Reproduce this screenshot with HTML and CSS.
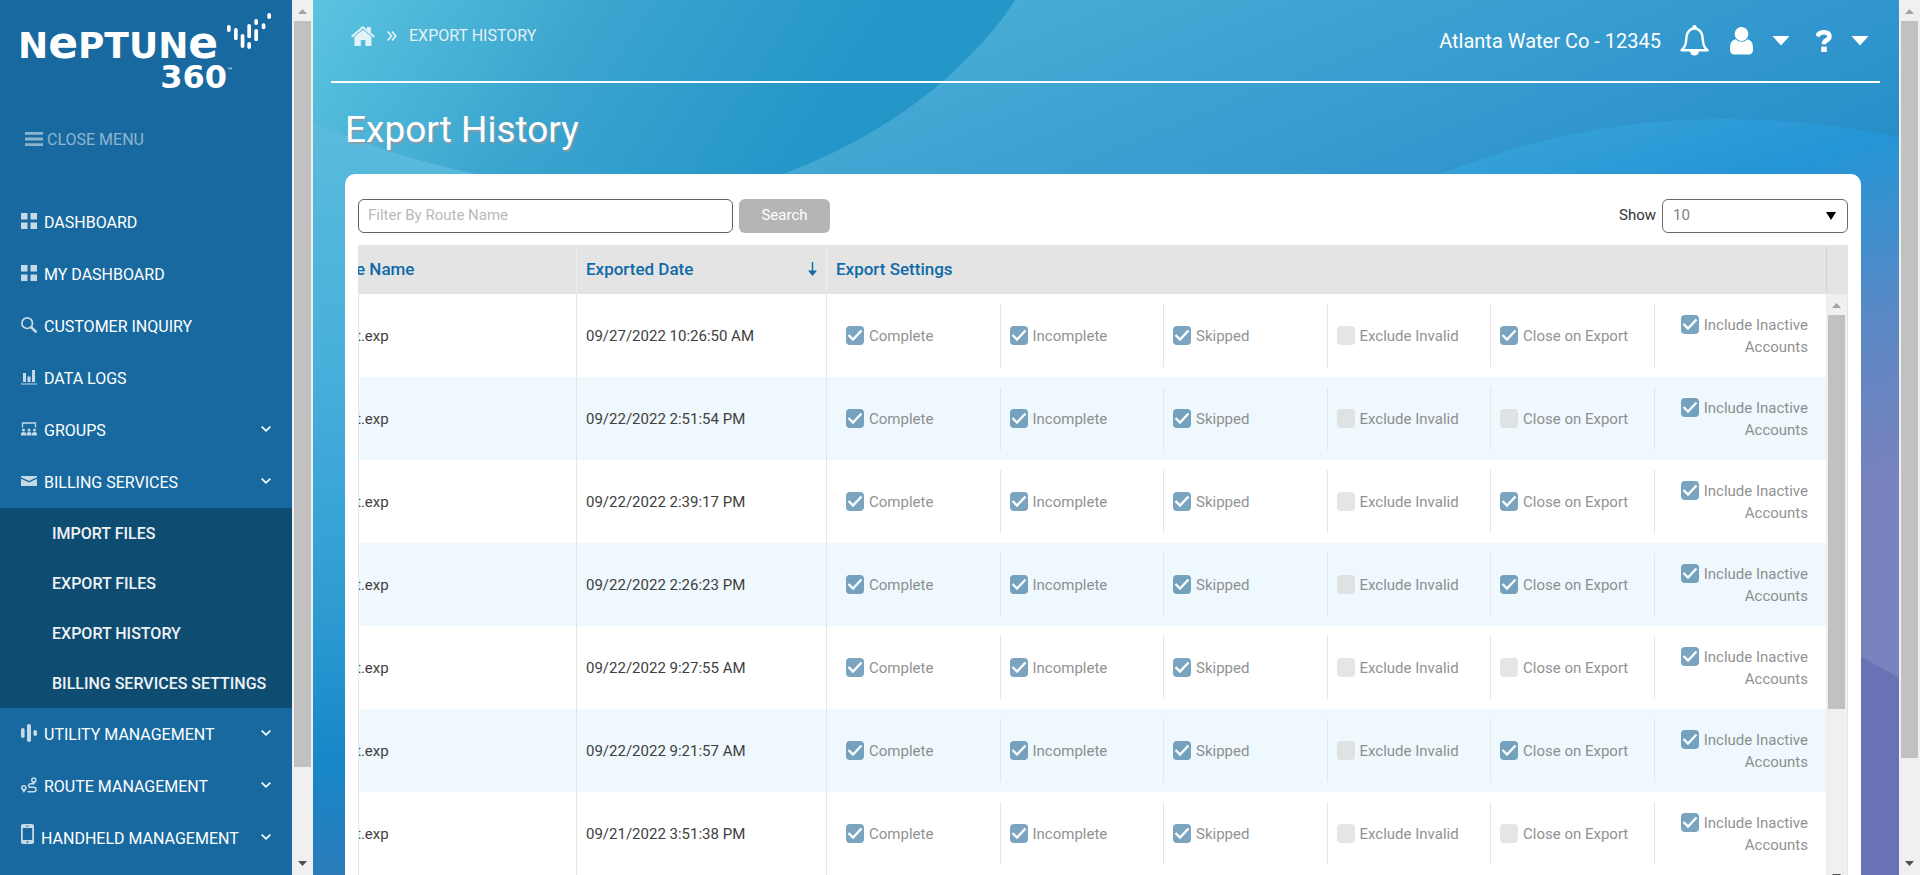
FILE: index.html
```html
<!DOCTYPE html>
<html lang="en">
<head>
<meta charset="utf-8">
<title>Export History - Neptune 360</title>
<link rel="stylesheet" href="styles.css">
</head>
<body>
<svg class="sprite" aria-hidden="true">
  <symbol id="i-tiles" viewBox="0 0 16 16"><path fill="currentColor" d="M0 0h6.500v6.500H0zM9.500 0H16v6.500H9.500zM0 9.500h6.500V16H0zM9.500 9.500H16V16H9.500z"/></symbol>
  <symbol id="i-search" viewBox="0 0 16 16"><circle cx="6.200" cy="6.200" r="5.300" fill="none" stroke="currentColor" stroke-width="1.700"/><path d="M10.500 10.500l4.200 4.200" stroke="currentColor" stroke-width="2.600" stroke-linecap="round"/></symbol>
  <symbol id="i-bars" viewBox="0 0 16 16"><path fill="currentColor" d="M2 4h3v9H2zM6.500 7.500h3V13h-3zM11 1h3v12h-3zM0 14.500h16v1H0z"/></symbol>
  <symbol id="i-groups" viewBox="0 0 16 16"><path fill="none" stroke="currentColor" stroke-width="1.300" d="M1.500 6.500V2h13v4.500"/><g fill="currentColor"><circle cx="2.500" cy="9" r="1.500"/><circle cx="8" cy="9" r="1.500"/><circle cx="13.500" cy="9" r="1.500"/><path d="M0 14.500v-2q0-1.500 2.500-1.500T5 12.500v2zM5.500 14.500v-2Q5.500 11 8 11t2.500 1.500v2zM11 14.500v-2q0-1.500 2.500-1.500t2.500 1.500v2z"/></g></symbol>
  <symbol id="i-mail" viewBox="0 0 16 16"><path fill="currentColor" d="M0 3h16v1.200L8 8 0 4.200zM0 5.800l8 3.700 8-3.700V13H0z"/></symbol>
  <symbol id="i-utility" viewBox="0 0 16 18"><g fill="currentColor"><rect y="4" width="3.600" height="10" rx="1.800"/><rect x="6" width="4" height="18" rx="2"/><rect x="12.400" y="6" width="3.600" height="6" rx="1.800"/></g></symbol>
  <symbol id="i-route" viewBox="0 0 16 16"><g fill="none" stroke="currentColor"><circle cx="12.800" cy="3" r="2" stroke-width="1.600"/><circle cx="2.900" cy="10.700" r="2" stroke-width="1.600"/><path stroke-width="1.500" d="M12.500 5.500v1.200H9.500a1.700 1.700 0 0 0 0 3.600h3.300a2.200 2.200 0 0 1 0 4.500H6.500"/></g><path fill="currentColor" d="M.5 12h4.800l-2.400 4zM10.600 4.500h4.400l-2.200 3.200z"/></symbol>
  <symbol id="i-phone" viewBox="0 0 13 20"><path fill="currentColor" fill-rule="evenodd" d="M2 0h9q2 0 2 2v16q0 2-2 2H2q-2 0-2-2V2q0-2 2-2zM1.800 4v12h9.400V4zM5 1.800v.7h3v-.7zM6.500 17.200a.9.900 0 1 0 .01 0z"/></symbol>
  <symbol id="i-chevron" viewBox="0 0 10 6"><path fill="none" stroke="currentColor" stroke-width="1.700" d="M.7.7 5 4.800 9.300.7"/></symbol>
</svg>

<div class="app">
  <aside class="side">
    <div class="side-body">
      <div class="logo">
        <div class="wordmark">
          <div class="word">N<span class="tall">e</span>PTUN<span class="tall">e</span></div>
          <div class="num">360<span class="tm">™</span></div>
        </div>
        <svg class="dots" viewBox="0 0 44 36" aria-hidden="true"><g fill="#fff"><rect x="0" y="12" width="3.700" height="7" rx="1.800"/><rect x="7" y="15" width="3.700" height="12.300" rx="1.800"/><rect x="13.700" y="21" width="3.700" height="14" rx="1.800"/><rect x="20.300" y="11" width="3.700" height="14.300" rx="1.800"/><rect x="20.300" y="29" width="3.700" height="7" rx="1.800"/><rect x="27.300" y="6" width="3.700" height="6" rx="1.800"/><rect x="27.300" y="16" width="3.700" height="12.300" rx="1.800"/><rect x="34.700" y="10.300" width="3.700" height="6" rx="1.800"/><rect x="40.300" y="0" width="3.700" height="6" rx="1.800"/></g></svg>
      </div>
      <button class="close-menu" type="button">
        <svg width="18" height="14" viewBox="0 0 18 14" aria-hidden="true"><path fill="currentColor" d="M0 0h18v2.800H0zM0 5.600h18v2.800H0zM0 11.200h18V14H0z"/></svg>
        CLOSE MENU
      </button>
      <nav class="menu">
        <a href="#"><svg class="ico"><use href="#i-tiles"/></svg>DASHBOARD</a>
        <a href="#"><svg class="ico"><use href="#i-tiles"/></svg>MY DASHBOARD</a>
        <a href="#"><svg class="ico"><use href="#i-search"/></svg>CUSTOMER INQUIRY</a>
        <a href="#"><svg class="ico"><use href="#i-bars"/></svg>DATA LOGS</a>
        <a href="#"><svg class="ico"><use href="#i-groups"/></svg>GROUPS<svg class="chev"><use href="#i-chevron"/></svg></a>
        <a href="#"><svg class="ico"><use href="#i-mail"/></svg>BILLING SERVICES<svg class="chev"><use href="#i-chevron"/></svg></a>
        <div class="submenu">
          <a href="#">IMPORT FILES</a>
          <a href="#">EXPORT FILES</a>
          <a href="#">EXPORT HISTORY</a>
          <a href="#">BILLING SERVICES SETTINGS</a>
        </div>
        <a href="#"><svg class="ico ico-utility"><use href="#i-utility"/></svg>UTILITY MANAGEMENT<svg class="chev"><use href="#i-chevron"/></svg></a>
        <a href="#"><svg class="ico"><use href="#i-route"/></svg>ROUTE MANAGEMENT<svg class="chev"><use href="#i-chevron"/></svg></a>
        <a href="#"><svg class="ico ico-phone"><use href="#i-phone"/></svg>HANDHELD MANAGEMENT<svg class="chev"><use href="#i-chevron"/></svg></a>
      </nav>
    </div>
    <div class="bar"><i class="up"></i><i class="thumb thumb-side"></i><i class="down"></i></div>
  </aside>

  <main class="main">
    <svg class="scene" viewBox="313 0 1586 875" preserveAspectRatio="none" aria-hidden="true">
      <defs>
        <linearGradient id="g-top" gradientUnits="userSpaceOnUse" x1="1000" y1="0" x2="1330" y2="820"><stop offset="0" stop-color="#48acd5"/><stop offset=".55" stop-color="#268cc9"/><stop offset="1" stop-color="#6872b4"/></linearGradient>
        <linearGradient id="g-left" gradientUnits="userSpaceOnUse" x1="313" y1="120" x2="340" y2="875"><stop offset="0" stop-color="#5bbbdc"/><stop offset=".35" stop-color="#45afdb"/><stop offset=".65" stop-color="#2e9bd2"/><stop offset=".85" stop-color="#1787c8"/><stop offset="1" stop-color="#2b7bba"/></linearGradient>
        <linearGradient id="g-dome" gradientUnits="userSpaceOnUse" x1="313" y1="0" x2="720" y2="270"><stop offset="0" stop-color="#5bc4e0"/><stop offset=".5" stop-color="#3ba5cf"/><stop offset="1" stop-color="#2496c8"/></linearGradient>
        <linearGradient id="g-disc" gradientUnits="userSpaceOnUse" x1="1560" y1="100" x2="1730" y2="660"><stop offset="0" stop-color="#3aa4d9"/><stop offset=".22" stop-color="#2495d5"/><stop offset=".52" stop-color="#5b88c5"/><stop offset=".78" stop-color="#7882bd"/><stop offset="1" stop-color="#7882bd"/></linearGradient>
      </defs>
      <rect x="313" width="1586" height="875" fill="url(#g-top)"/>
      <path fill="url(#g-left)" d="M313 100 780 174V875H313z"/>
      <path fill="url(#g-disc)" d="M1440 174Q1580 119 1723 119 1810 119 1899 137V678L1861 657 1440 430z"/>
      <path fill="#6872b4" d="M1440 430 1861 657 1899 678V875H1440z"/>
      <path fill="url(#g-dome)" d="M313 0H1015Q995 33 950 75 880 138 783 174 630 215 477 174 395 158 313 122z"/>
    </svg>

    <header class="top">
      <div class="crumbs">
        <a href="#" aria-label="Home"><svg width="24" height="20" viewBox="0 0 24 20"><path fill="none" stroke="currentColor" stroke-width="2" d="M.7 10.800 11.800 1.300 23.200 10.800"/><path fill="currentColor" d="M16 1h3.800v6L16 4zM3.500 10.800 11.800 3.800l8.600 7V20h-6v-6H9.800v6H3.500z"/></svg></a>
        <svg width="10" height="10" viewBox="0 0 10 10" aria-hidden="true"><path fill="none" stroke="currentColor" stroke-width="1.700" d="M.8.500 4.500 5 .8 9.500M5 .5 8.700 5 5 9.500"/></svg>
        <span>EXPORT HISTORY</span>
      </div>
      <div class="account">
        <span class="tenant">Atlanta Water Co - 12345</span>
        <button class="icon-btn bell" type="button" aria-label="Notifications"><svg width="29" height="31" viewBox="0 0 29 31"><path fill="none" stroke="currentColor" stroke-width="2.400" stroke-linejoin="round" d="M1.500 25.300Q5.500 22 6 16.500L6.600 11.500Q7.600 4.200 14.500 3.200 21.400 4.200 22.400 11.500L23 16.500Q23.500 22 27.500 25.300z"/><circle cx="14.500" cy="2.300" r="2.200" fill="currentColor"/><path fill="currentColor" d="M10 26h9a4.500 4.500 0 0 1-9 0z"/></svg></button>
        <button class="icon-btn user" type="button" aria-label="User menu"><svg width="23" height="28" viewBox="0 0 23 28"><path fill="currentColor" d="M11.500 0a6.800 7 0 1 1-.01 0zM5.500 12.200Q8 14.800 11.500 14.800t6-2.600q5.500 1.300 5.500 8.300v2q0 5-4.500 5h-14Q0 27.500 0 22.500v-2q0-7 5.500-8.300z"/></svg><i class="caret"></i></button>
        <button class="icon-btn help" type="button" aria-label="Help menu"><svg width="16" height="22" viewBox="0 0 16 22"><path fill="none" stroke="currentColor" stroke-width="4.600" d="M1.300 6.300Q3 2.300 8 2.300q5.400 0 5.400 4.200 0 2.600-3.400 4-2 1-2 3.700"/><path fill="currentColor" d="M5.200 16.500h5.600V22H5.200z"/></svg><i class="caret"></i></button>
      </div>
    </header>

    <h1 class="title">Export History</h1>

    <section class="card">
      <div class="tools">
        <input class="filter" type="text" placeholder="Filter By Route Name" aria-label="Filter By Route Name">
        <button class="search" type="button">Search</button>
        <label class="show-label" for="page-size">Show</label>
        <select class="page-size" id="page-size"><option>10</option></select>
      </div>
      <div class="grid">
        <table class="table">
          <thead><tr><th class="c-file">e Name</th><th class="c-date"><span class="sort">Exported Date<svg width="9" height="14" viewBox="0 0 9 14" aria-hidden="true"><path fill="currentColor" d="M3.800 0h1.400v8.500H9L4.500 14 0 8.500h3.800z"/></svg></span></th><th>Export Settings</th></tr></thead>
          <tbody id="rows"></tbody>
        </table>
        <div class="grid-side">
          <div class="cap"></div>
          <div class="bar bar-grid"><i class="up"></i><i class="thumb thumb-grid"></i><i class="down"></i></div>
        </div>
      </div>
    </section>
  </main>
  <div class="bar"><i class="up"></i><i class="thumb thumb-page"></i><i class="down"></i></div>
</div>
<script src="rows.js"></script>
</body>
</html>
```
FILE: styles.css
```css
* { box-sizing: border-box; }
body { margin: 0; font-family: Roboto, "Liberation Sans", sans-serif; color: #404040; overflow: hidden; }
button, input, select { font-family: inherit; }
a { color: inherit; text-decoration: none; }
.sprite { display: none; }
.app { display: flex; height: 100vh; overflow: hidden; }

/* scrollbars */
.bar { flex: none; width: 21px; background: #f0f0f0; display: flex; flex-direction: column; align-items: center; }
.bar .up, .bar .down { flex: none; width: 9px; height: 5px; background: #a3a3a3; clip-path: polygon(50% 0, 100% 100%, 0 100%); }
.bar .up { margin: 9px 0 7px; }
.bar .down { background: #4f4f4f; clip-path: polygon(0 0, 100% 0, 50% 100%); margin: auto 0 9px; }
.bar .thumb { width: 17px; background: #c1c1c1; }
.thumb-side { height: 746px; }
.thumb-page { height: 737px; }
.thumb-grid { height: 394px; }

/* sidebar */
.side { flex: none; display: flex; }
.side-body { width: 292px; background: #17699f; color: #fff; font-size: 16px; overflow: hidden; }
.logo { display: flex; align-items: flex-start; padding: 13px 0 0 18px; height: 113px; }
.wordmark { flex: none; width: 209px; padding-top: 15px; font-family: "DejaVu Sans", sans-serif; font-weight: 700; }
.word { font-size: 36px; line-height: 36px; height: 36px; white-space: nowrap; }
.word .tall { font-size: 44px; line-height: 1px; }
.num { display: flex; justify-content: flex-end; font-size: 32px; line-height: 26px; }
.tm { width: 0; font-size: 6px; line-height: 12px; }
.dots { width: 44px; height: 36px; }
.close-menu { display: flex; align-items: center; gap: 4px; margin: 13px 0 43px; padding: 0 0 0 25px; height: 26px; border: 0; background: none; color: #fff; font-size: 16px; opacity: .5; }
.menu { padding-top: 1px; }
.menu > a { display: flex; align-items: center; height: 52px; padding: 0 21px; }
.ico { width: 16px; height: 16px; margin: 0 7px 2px 0; color: #fff; opacity: .75; }
.ico-utility { height: 18px; }
.ico-phone { width: 13px; height: 20px; margin-bottom: 8px; }
.chev { width: 10px; height: 6px; margin: 0 0 2px auto; }
.submenu { background: #0f4c72; color: #eef2f5; font-weight: 500; }
.submenu a { display: flex; align-items: center; height: 50px; padding-left: 52px; }

/* main */
.main { flex: 1; min-width: 0; position: relative; overflow: hidden; display: flex; flex-direction: column; }
.scene { position: absolute; inset: 0; width: 100%; height: 100%; }
.top, .title, .card { position: relative; }
.top { flex: none; display: flex; justify-content: space-between; height: 83px; margin: 0 19px 0 18px; padding: 0 11px 0 20px; border-bottom: 2px solid #fff; color: #fff; }
.crumbs { display: flex; align-items: center; gap: 12px; height: 71px; font-size: 16px; color: #e4f2f7; }
.crumbs a { display: flex; }
.account { display: flex; align-items: center; height: 81px; }
.tenant { font-size: 20px; }
.icon-btn { display: flex; align-items: center; gap: 19px; padding: 0; border: 0; background: none; color: #fff; }
.bell { margin-left: 19px; }
.user { margin-left: 21px; }
.help { margin-left: 26px; }
.caret { width: 18px; height: 10px; background: #fff; clip-path: polygon(0 0, 100% 0, 50% 100%); }
.title { flex: none; margin: 25px 0 22px 32px; font-size: 37px; font-weight: 400; line-height: 44px; color: #fff; text-shadow: 1px 2px 2px #8a9ba8; }
.card { flex: none; margin: 0 38px 0 32px; padding: 25px 13px 20px; background: #fff; border-radius: 10px; }
.tools { display: flex; align-items: center; height: 34px; margin-bottom: 12px; font-size: 15px; }
.filter { width: 375px; height: 34px; padding: 0 9px 3px; border: 1px solid #5f6063; border-radius: 6px; font-size: 15px; background: #fff; }
.filter::placeholder { color: #b9b9b9; opacity: 1; }
.search { width: 91px; height: 34px; margin-left: 6px; padding: 0 0 3px; border: 0; border-radius: 6px; background: #b5b5b5; color: #fff; font-size: 15px; }
.show-label { margin: 0 6px 3px auto; color: #333; }
.page-size { appearance: none; width: 186px; height: 34px; padding: 0 10px 3px; border: 1px solid #6a6b6e; border-radius: 6px; font-size: 15px; color: #808080; background: #fff url("data:image/svg+xml,%3Csvg xmlns='http://www.w3.org/2000/svg' width='10' height='8'%3E%3Cpath d='M0 0h10L5 8z'/%3E%3C/svg%3E") no-repeat right 11px center; }

/* export table */
.grid { display: flex; align-items: flex-start; }
.table { flex: 1; min-width: 0; table-layout: fixed; border-collapse: separate; border-spacing: 0; font-size: 15px; }
.table th { height: 49px; padding: 0 9px 2px; background: #e4e4e4; color: #0f6aa8; font-size: 17px; font-weight: 500; text-align: left; white-space: nowrap; border-right: 1px solid #eee; }
.table th:last-child { border-right: 0; }
.table td { height: 83px; padding: 0 9px; border-right: 1px solid #e3e5e6; }
.table td:last-child { padding-left: 10px; border-right: 0; }
.table tbody tr:nth-child(even) { background: #eff8fc; }
.table .c-file { width: 219px; padding-left: 0; text-indent: -2px; overflow: hidden; white-space: nowrap; }
.table td.c-file { border-left: 1px solid #e3e5e6; text-indent: -3px; }
.table .c-date { width: 250px; }
.sort { display: flex; align-items: center; justify-content: space-between; }
.settings { display: flex; height: 63px; }
.opt { flex: 1 1 0; min-width: 0; display: flex; align-items: center; padding: 0 9px; border-left: 1px solid #e3e5e6; }
.opt:first-child { border-left: 0; }
.opt label { line-height: 22px; opacity: .6; color: #494949; }
.opt:last-child { justify-content: flex-end; text-align: right; }
.opt input { appearance: none; width: 18px; height: 19px; margin: 0 5px 0 0; border-radius: 4px; background: #d4d4d4; vertical-align: -4px; }
.opt input:checked { background: #236996 url("data:image/svg+xml,%3Csvg xmlns='http://www.w3.org/2000/svg' width='18' height='19'%3E%3Cpath d='M2.500 9l4.500 4.500L15.500 4.500' fill='none' stroke='white' stroke-width='2.400'/%3E%3C/svg%3E") center no-repeat; }
.grid-side { flex: none; width: 22px; display: flex; flex-direction: column; }
.cap { height: 49px; padding-top: 1px; background: #e4e4e4; }
.cap::before { content: ""; display: block; width: 1px; height: 45px; background: #cfcfcf; }
.bar-grid { height: 594px; width: 22px; border-right: 1px solid #e3e5e6; }
```
FILE: rows.js
```js
const rows = [
  ["09/27/2022 10:26:50 AM", true],
  ["09/22/2022 2:51:54 PM", false],
  ["09/22/2022 2:39:17 PM", true],
  ["09/22/2022 2:26:23 PM", true],
  ["09/22/2022 9:27:55 AM", false],
  ["09/22/2022 9:21:57 AM", true],
  ["09/21/2022 3:51:38 PM", false]
];

const option = (name, on) =>
  `<div class="opt"><label><input type="checkbox" disabled${on ? " checked" : ""}>${name}</label></div>`;

document.getElementById("rows").innerHTML = rows.map(([date, close]) => `
  <tr>
    <td class="c-file">t.exp</td>
    <td>${date}</td>
    <td><div class="settings">
      ${option("Complete", true)}${option("Incomplete", true)}${option("Skipped", true)}
      ${option("Exclude Invalid", false)}${option("Close on Export", close)}${option("Include Inactive Accounts", true)}
    </div></td>
  </tr>`).join("");
```
